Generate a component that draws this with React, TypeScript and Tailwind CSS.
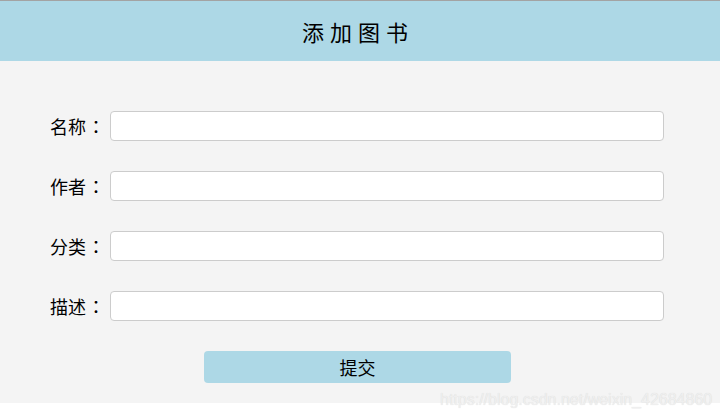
import { useState } from 'react';

const FIELDS = [
  { key: 'name', label: '名称' },
  { key: 'author', label: '作者' },
  { key: 'category', label: '分类' },
  { key: 'desc', label: '描述' },
];

const CJK = { fontFamily: '"Noto Sans CJK SC", "Noto Sans", sans-serif' };

export default function App() {
  const [values, setValues] = useState<Record<string, string>>({});

  return (
    <div className="relative h-[420px] w-[720px] bg-white" style={CJK}>
      {/* Header */}
      <div className="flex h-[61px] items-center justify-center border-t border-[#a3a3a3] bg-[#add8e6]">
        <h1 className="pr-[4px] text-[22px] leading-none tracking-[6px] text-black">添加图书</h1>
      </div>

      {/* Form */}
      <div className="flex flex-col gap-[30px] bg-[#f4f4f4] pt-[50px] pb-[20px]">
        {FIELDS.map(f => (
          <div key={f.key} className="flex items-center pl-[50px]">
            <label className="flex w-[60px] items-center whitespace-nowrap text-[18px] leading-none text-black">
              {f.label}
              <span className="ml-[1px]" style={{ fontFamily: '"Noto Sans CJK JP", sans-serif' }}>：</span>
            </label>
            <input
              type="text"
              value={values[f.key] ?? ''}
              onChange={e => setValues(v => ({ ...v, [f.key]: e.target.value }))}
              className="h-[30px] w-[554px] rounded-[4px] border border-[#cccccc] bg-white px-2 text-[14px] outline-none"
            />
          </div>
        ))}
        <div className="pl-[204px]">
          <button className="h-[32px] w-[307px] rounded-[4px] bg-[#add8e6] text-[18px] leading-none text-black">
            提交
          </button>
        </div>
      </div>

      {/* Watermark */}
      <span
        className="absolute left-[440px] top-[392px] text-[16px] leading-none text-[#efefef]"
        style={{ fontFamily: '"Liberation Sans", Arial, sans-serif', textShadow: '0 0 1px rgba(0,0,0,0.12)' }}
      >
        https://blog.csdn.net/weixin_42684860
      </span>
    </div>
  );
}
